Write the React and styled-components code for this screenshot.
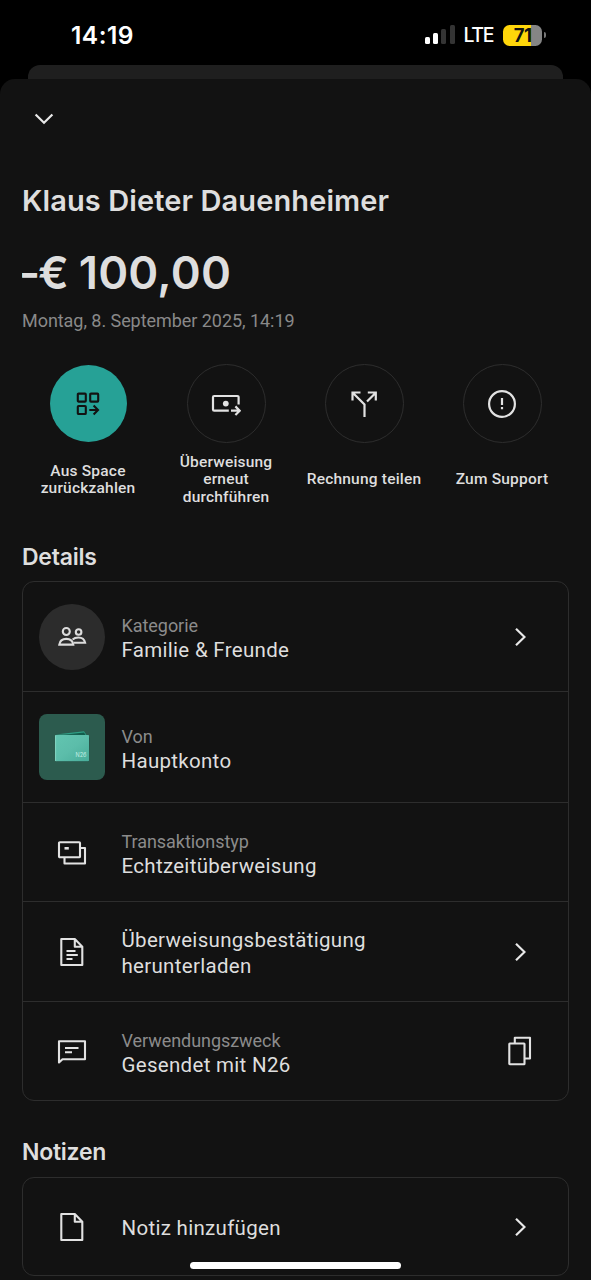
import React from "react";
import styled, { createGlobalStyle, css } from "styled-components";

const GlobalStyle = createGlobalStyle`
  * { box-sizing: border-box; }
  body {
    margin: 0;
    background: #000;
    overflow: hidden;
  }
`

const SpaceIcon = () => (
  <svg width="24" height="24" viewBox="0 0 24 24" fill="none" stroke="#121212" strokeWidth="2.1">
    <rect x="1.8" y="1.6" width="8" height="8" rx="0.8" />
    <rect x="14.2" y="1.6" width="8" height="8" rx="0.8" />
    <rect x="1.8" y="14" width="8" height="8" rx="0.8" />
    <path d="M13.3 18h8.6M17.6 13.6l4.4 4.4-4.4 4.4" />
  </svg>
)

const TransferIcon = () => (
  <svg width="30" height="24" viewBox="0 0 30 24" fill="none" stroke="#e2e2e2" strokeWidth="2.2">
    <path d="M27.6 12.5V5.2c0-.8-.4-1.2-1.2-1.2H3.2C2.4 4 2 4.4 2 5.2V17.5c0 .8.4 1.2 1.2 1.2H17.8" />
    <circle cx="14.8" cy="11.6" r="2.9" fill="#e2e2e2" stroke="none" />
    <path d="M20 18.7h8.6M24.4 14.4l4.3 4.3-4.3 4.3" />
  </svg>
)

const SplitIcon = () => (
  <svg width="28" height="28" viewBox="0 0 28 28" fill="none" stroke="#e2e2e2" strokeWidth="2.2">
    <path d="M2.5 10.5V2.5h8M2.5 2.5L14.5 14.5V27M17 11.5l9-9M17.8 2.5h8v8" />
  </svg>
)

const SupportIcon = () => (
  <svg width="30" height="30" viewBox="0 0 30 30" fill="none" stroke="#e2e2e2" strokeWidth="2.2">
    <circle cx="15" cy="15" r="12.9" />
    <path d="M15 9v7M15 17.9v2.4" />
  </svg>
)

const PeopleIcon = () => (
  <svg width="30" height="24" viewBox="0 0 30 24" fill="none" stroke="#dcdcdc" strokeWidth="2.1">
    <circle cx="9.3" cy="6.5" r="3.5" />
    <circle cx="21.6" cy="7" r="2.8" />
    <path d="M2.3 19.6c.5-3.7 3.2-5.7 7-5.7s6.5 2 7 5.700z" />
    <path d="M15.6 14.4c1.4-1.3 3.4-1.9 5.8-1.9 3.6 0 6 1.7 6.7 5.2H16.5" />
  </svg>
)

const WalletIcon = () => (
  <svg width="42" height="36" viewBox="0 0 42 36">
    <defs>
      <linearGradient id="wallet" x1="0" y1="0" x2="1" y2="1">
        <stop offset="0" stopColor="#62c5b0" />
        <stop offset="0.5" stopColor="#5cbdaa" />
        <stop offset="1" stopColor="#48ad99" />
      </linearGradient>
    </defs>
    <path d="M4.5 7L34 4l4.8 5-1 24H5.5z" fill="#1f4a40" opacity="0.6" />
    <path d="M4.5 5.5L33 2.3l2.5 3.7z" fill="#2f9f86" />
    <path d="M13 5.7l20-2.2 1.5 2.6z" fill="#125c4b" />
    <rect x="4.2" y="6" width="33.8" height="26.3" rx="0.8" fill="url(#wallet)" />
    <path d="M4.6 6.3V32" stroke="#8fe0cd" strokeWidth="0.8" />
    <text x="24.5" y="27.8" fontFamily="Inter, sans-serif" fontSize="5.5" fill="#c3efe4">N26</text>
  </svg>
)

const CardsIcon = () => (
  <svg width="30" height="26" viewBox="0 0 30 26" fill="none" stroke="#e2e2e2" strokeWidth="2.1" strokeLinejoin="round">
    <rect x="2" y="2.3" width="21" height="15" rx="0.8" />
    <path d="M23.5 8H28v15.5H7.5V18" />
    <path d="M7.5 8.3h4.3" strokeWidth="2.6" />
  </svg>
)

const DocumentIcon = ({ lines }) => (
  <svg width="26" height="30" viewBox="0 0 26 30" fill="none" stroke="#e2e2e2" strokeWidth="2.1" strokeLinejoin="round">
    <path d="M2.3 2H15.8L23.3 9.7V28H2.3zM15.8 2v7.7h7.5" />
    {lines && <path d="M7.5 14h9M7.5 18h11.3M7.5 22h6" />}
  </svg>
)

const MessageIcon = () => (
  <svg width="30" height="26" viewBox="0 0 30 26" fill="none" stroke="#e2e2e2" strokeWidth="2.1" strokeLinejoin="round">
    <path d="M2 23.5V2.3H28V20.2H5.5z" />
    <path d="M8 9h13.5M8 13.3h7" />
  </svg>
)

const CopyIcon = () => (
  <svg width="24" height="30" viewBox="0 0 24 30" fill="none" stroke="#e2e2e2" strokeWidth="2.1" strokeLinejoin="round">
    <rect x="1.3" y="7.5" width="15.2" height="20.7" rx="0.5" />
    <path d="M6.8 7V1.8H22V22.5H17" />
  </svg>
)

const ChevronRight = () => (
  <svg width="12" height="20" viewBox="0 0 12 20" fill="none" stroke="#e8e8e8" strokeWidth="2.2">
    <path d="M2 1.7L10.500 10l-8.500 8.300" />
  </svg>
)

const ChevronDown = () => (
  <svg width="20" height="12" viewBox="0 0 20 12" fill="none" stroke="#e8e8e8" strokeWidth="2.2">
    <path d="M1.6 1.5L10 9.7l8.4-8.2" />
  </svg>
)

const actions = [
  { lines: ["Aus Space", "zurückzahlen"], icon: <SpaceIcon />, active: true },
  { lines: ["Überweisung", "erneut", "durchführen"], icon: <TransferIcon /> },
  { lines: ["Rechnung teilen"], icon: <SplitIcon /> },
  { lines: ["Zum Support"], icon: <SupportIcon /> },
]

const details = [
  { label: "Kategorie", value: "Familie & Freunde", icon: <PeopleIcon />, shape: "circle", end: <ChevronRight />, height: 109 },
  { label: "Von", value: "Hauptkonto", icon: <WalletIcon />, shape: "square", height: 111 },
  { label: "Transaktionstyp", value: "Echtzeitüberweisung", icon: <CardsIcon />, height: 99 },
  { value: "Überweisungsbestätigung herunterladen", icon: <DocumentIcon lines />, end: <ChevronRight />, height: 100 },
  { label: "Verwendungszweck", value: "Gesendet mit N26", icon: <MessageIcon />, end: <CopyIcon />, height: 99 },
]

const Row = ({ label, value, icon, shape, end, height }) => {
  return (
    <RowBox $height={height}>
      <RowIcon $shape={shape}>{icon}</RowIcon>
      <RowText>
        {label && <RowLabel>{label}</RowLabel>}
        <RowValue>{value}</RowValue>
      </RowText>
      {end && <RowEnd>{end}</RowEnd>}
    </RowBox>
  )
}

const App = () => {
  return (
    <Screen>
      <GlobalStyle />
      <StatusBar>
        <Time>14:19</Time>
        <StatusRight>
          <Signal>
            <SignalBar $height={7} $on />
            <SignalBar $height={11} $on />
            <SignalBar $height={15} />
            <SignalBar $height={19} />
          </Signal>
          <Network>LTE</Network>
          <Battery>
            <BatteryBody>71</BatteryBody>
            <BatteryTip />
          </Battery>
        </StatusRight>
      </StatusBar>
      <BackSheet />
      <Sheet>
        <CloseBtn aria-label="Schließen"><ChevronDown /></CloseBtn>
        <Title>Klaus Dieter Dauenheimer</Title>
        <Amount><Sign>–</Sign>€ 100,00</Amount>
        <DateText>Montag, 8. September 2025, 14:19</DateText>
        <Actions>
          {actions.map((a) => (
            <Action key={a.lines[0]}>
              <ActionCircle $active={a.active}>{a.icon}</ActionCircle>
              <ActionLabel>
                {a.lines.map((l) => <span key={l}>{l}</span>)}
              </ActionLabel>
            </Action>
          ))}
        </Actions>
        <SectionTitle>Details</SectionTitle>
        <Card>
          {details.map((d) => <Row key={d.value} {...d} />)}
        </Card>
        <SectionTitle $height={40}>Notizen</SectionTitle>
        <Card>
          <Row value="Notiz hinzufügen" icon={<DocumentIcon />} end={<ChevronRight />} height={97} />
        </Card>
      </Sheet>
      <HomeIndicator />
    </Screen>
  )
}

const Screen = styled.div`
  position: relative;
  display: flex;
  flex-direction: column;
  width: 591px;
  height: 1280px;
  overflow: hidden;
  background: #000;
  color: #dedede;
  font-family: Roboto, "Liberation Sans", sans-serif;
`

const StatusBar = styled.div`
  display: flex;
  justify-content: space-between;
  align-items: center;
  height: 65px;
  padding: 5px 45px 0 71px;
  flex-shrink: 0;
  font-family: Inter, sans-serif;
  color: #fff;
`

const Time = styled.div`
  font-size: 24.5px;
  font-weight: 600;
  letter-spacing: 0.5px;
`

const StatusRight = styled.div`
  display: flex;
  align-items: center;
`

const Signal = styled.div`
  display: flex;
  align-items: flex-end;
  gap: 3.3px;
  height: 19px;
  margin-right: 9px;
  margin-bottom: 1px;
`

const SignalBar = styled.div`
  width: 5px;
  height: ${(p) => p.$height}px;
  border-radius: 1.5px;
  background: ${(p) => (p.$on ? "#fff" : "#343434")};
`

const Network = styled.div`
  font-size: 19.5px;
  font-weight: 500;
  letter-spacing: -1.4px;
  margin-right: 10px;
`

const Battery = styled.div`
  display: flex;
  align-items: center;
  gap: 2px;
`

const BatteryBody = styled.div`
  width: 39px;
  height: 21px;
  border-radius: 6.5px;
  background: linear-gradient(90deg, #ffd60a 28px, #858585 28px);
  color: #111;
  font-size: 18.5px;
  font-weight: 700;
  line-height: 21px;
  letter-spacing: -0.5px;
  text-align: center;
`

const BatteryTip = styled.div`
  width: 2px;
  height: 6px;
  border-radius: 0 2px 2px 0;
  background: #777;
`

const BackSheet = styled.div`
  height: 14px;
  flex-shrink: 0;
  margin: 0 28px;
  border-radius: 12px 12px 0 0;
  background: #1f1f1f;
`

const Sheet = styled.div`
  display: flex;
  flex-direction: column;
  height: 1201px;
  flex-shrink: 0;
  padding: 0 22px;
  border-radius: 15px 15px 0 0;
  background: #121212;
`

const CloseBtn = styled.button`
  display: flex;
  align-items: center;
  justify-content: center;
  width: 44px;
  height: 44px;
  flex-shrink: 0;
  margin: 18px 0 0;
  padding: 0;
  border: none;
  background: none;
`

const Title = styled.h1`
  margin: 42px 0 0;
  height: 36px;
  font-family: Inter, sans-serif;
  font-size: 29px;
  font-weight: 600;
  line-height: 36px;
  letter-spacing: 0.1px;
  white-space: nowrap;
`

const Amount = styled.div`
  margin-top: 26px;
  height: 56px;
  font-family: Inter, sans-serif;
  font-size: 45.5px;
  font-weight: 600;
  line-height: 56px;
  letter-spacing: 0.2px;
  word-spacing: -2px;
  white-space: nowrap;
`

// en dash squeezed to the width of the minus sign
const Sign = styled.span`
  display: inline-block;
  margin-right: -7px;
  transform: scaleX(0.66);
  transform-origin: left;
`

const DateText = styled.div`
  margin-top: 8px;
  height: 24px;
  font-size: 18px;
  line-height: 24px;
  letter-spacing: -0.05px;
  color: #898989;
  white-space: nowrap;
`

const Actions = styled.div`
  display: grid;
  grid-template-columns: repeat(4, 138px);
  margin: 31px -3px 0;
`

const Action = styled.div`
  display: flex;
  flex-direction: column;
  align-items: center;
`

const ActionCircle = styled.div`
  display: flex;
  align-items: center;
  justify-content: center;
  width: 79px;
  height: 79px;
  border-radius: 50%;
  border: 1px solid #2d2d2d;
  ${(p) => p.$active && css`
    background: #26a196;
    background-clip: padding-box;
    border-color: transparent;
  `}
`

const ActionLabel = styled.div`
  display: flex;
  flex-direction: column;
  align-items: center;
  justify-content: center;
  height: 52px;
  margin-top: 11px;
  font-size: 15.5px;
  font-weight: 500;
  line-height: 17.3px;
  letter-spacing: 0.2px;
  white-space: nowrap;
`

const SectionTitle = styled.h2`
  margin: 36px 0 0;
  height: ${(p) => p.$height || 39}px;
  flex-shrink: 0;
  font-family: Inter, sans-serif;
  font-size: 23px;
  font-weight: 600;
  line-height: 30px;
  letter-spacing: -0.25px;
`

const Card = styled.div`
  flex-shrink: 0;
  width: 547px;
  border: 1px solid #2d2d2d;
  border-radius: 12px;
`

const RowBox = styled.div`
  display: flex;
  align-items: center;
  height: ${(p) => p.$height}px;
  padding: 0 36px 0 15.5px;
  & + & {
    border-top: 1px solid #2d2d2d;
  }
`

const RowIcon = styled.div`
  display: flex;
  align-items: center;
  justify-content: center;
  width: 66px;
  height: 66px;
  flex-shrink: 0;
  padding-top: ${(p) => (p.$shape ? 0 : 1)}px;
  background: ${(p) => (p.$shape === "circle" ? "#2c2c2c" : p.$shape === "square" ? "#2c5b4e" : "none")};
  border-radius: ${(p) => (p.$shape === "circle" ? "50%" : "8px")};
`

const RowText = styled.div`
  display: flex;
  flex-direction: column;
  width: 290px;
  margin-left: 17px;
  padding-top: 3px;
`

const RowLabel = styled.div`
  height: 24px;
  font-size: 18px;
  line-height: 26px;
  letter-spacing: -0.05px;
  color: #8b8b8b;
`

const RowValue = styled.div`
  font-size: 20.5px;
  line-height: 26px;
  letter-spacing: 0.3px;
`

const RowEnd = styled.div`
  display: flex;
  justify-content: center;
  width: 24px;
  margin-left: auto;
`

const HomeIndicator = styled.div`
  position: absolute;
  left: 190px;
  bottom: 11px;
  width: 211px;
  height: 7px;
  border-radius: 4px;
  background: #fff;
`

export default App;
